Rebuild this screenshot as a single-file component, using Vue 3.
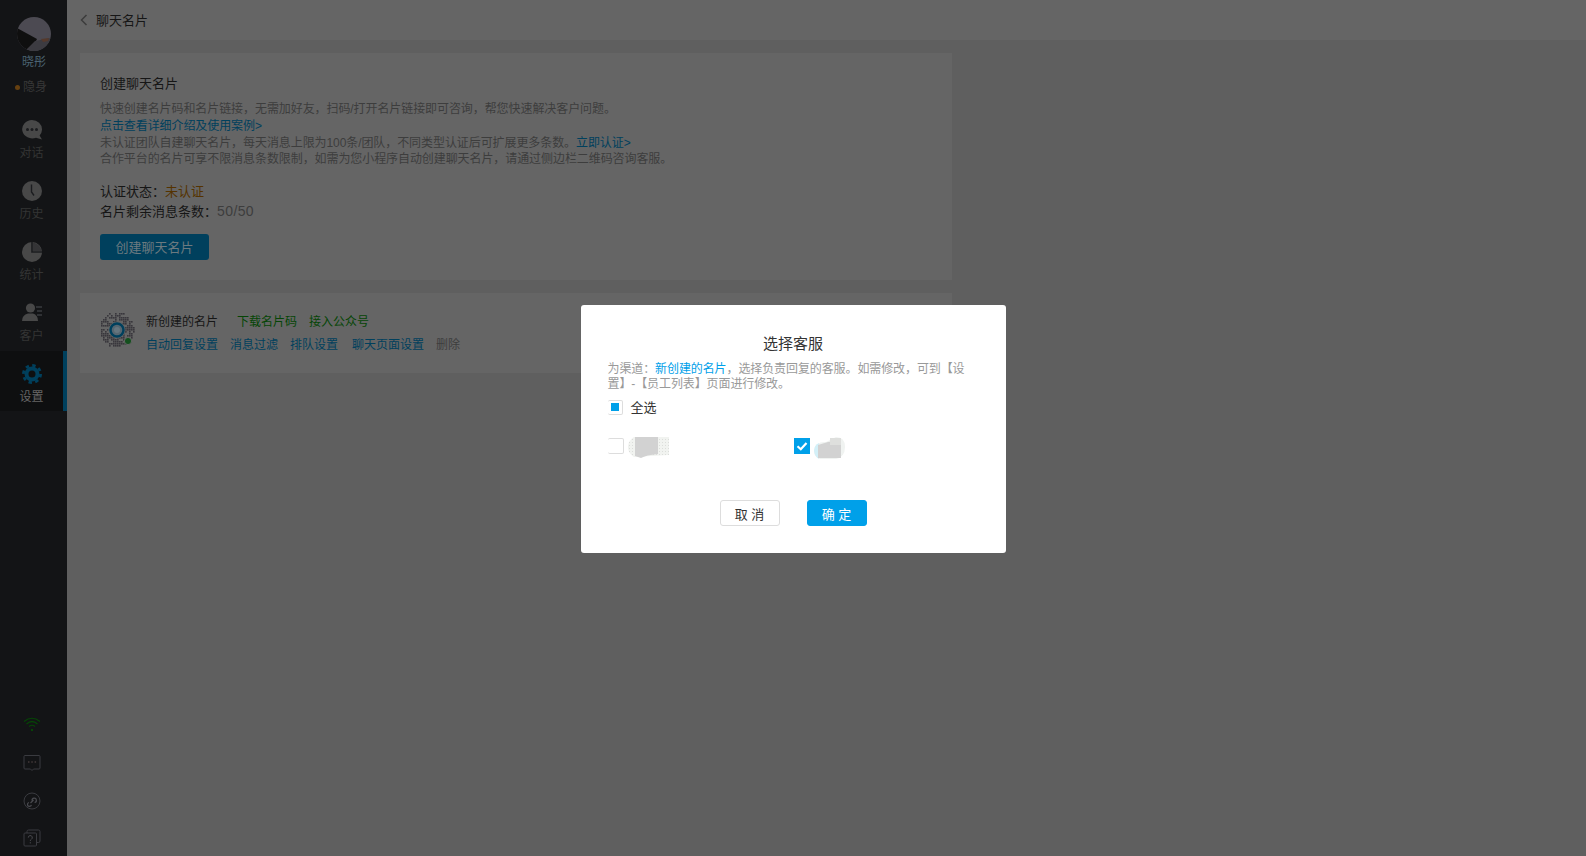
<template>
  <div class="page">
    <aside class="side">
      <svg class="avatar" viewBox="0 0 34 34">
        <clipPath id="av"><circle cx="17" cy="17" r="17" /></clipPath>
        <g clip-path="url(#av)">
          <rect width="34" height="34" fill="#4c4a52" />
          <path d="M0 11 L20 22 L18 26 L8 34 L0 34Z" fill="#0f0f0f" />
          <path d="M8 34 L18 24 L34 21 L34 34Z" fill="#3c3b41" />
          <path d="M24 22 L32 21 L31 24 L26 25Z" fill="#54392c" />
        </g>
      </svg>
      <div class="name">晓彤</div>
      <div class="status"><i class="dot"></i>隐身</div>

      <nav class="nav">
        <a v-for="item in navList" :key="item.label" class="nav-item" :class="{ active: item.active }">
          <svg class="nav-icon" viewBox="0 0 20 20" v-html="item.icon"></svg>
          <span>{{ item.label }}</span>
        </a>
      </nav>

      <div class="tools">
        <svg class="wifi" viewBox="0 0 18 18" fill="none" stroke="#064506" stroke-width="1.2">
          <path d="M1 6.5 Q9 0 17 6.5M3.5 9 Q9 4 14.5 9M6 11.5 Q9 9 12 11.5" />
          <rect x="8" y="14" width="2" height="2" fill="#064506" stroke="none" />
        </svg>
        <svg viewBox="0 0 18 18" fill="none" stroke="#3a3b40" stroke-width="1">
          <path d="M2 1.5H16Q17 1.5 17 2.5V14Q17 15 16 15H10.5L9 16.5L7.5 15H2Q1 15 1 14V2.5Q1 1.5 2 1.5Z" />
          <path d="M5 8h1.5M8.3 8h1.5M11.6 8h1.5" stroke="#5a4a4a" />
        </svg>
        <svg viewBox="0 0 18 18" fill="none" stroke="#3a3b40" stroke-width="1">
          <circle cx="9" cy="9" r="8" />
          <path d="M6 10.5a2 2 0 1 0 2.4 2.4M9 8.5a2.2 2.2 0 1 1 2.6 2M7.5 11L10.5 8" stroke="#4a4b50" stroke-width="1.2" />
        </svg>
        <svg viewBox="0 0 18 18" fill="none" stroke="#3a3b40" stroke-width="1">
          <rect x="1" y="4" width="12.5" height="13" rx="1" />
          <path d="M4 4V2.5Q4 1 5.5 1H15.5Q17 1 17 2.5V12Q17 13.5 15.5 13.5H13.5" />
          <path d="M5.3 8.6a2 2 0 1 1 3 1.7q-1 .6-1 1.6M7.3 13.2v1.2" stroke="#4a4b50" />
        </svg>
      </div>
    </aside>

    <main class="main">
      <header class="head">
        <svg class="back" viewBox="0 0 8 12" fill="none" stroke="#3c3c3c" stroke-width="1.5">
          <path d="M6.5 1L1.5 6L6.5 11" />
        </svg>
        <span>聊天名片</span>
      </header>

      <div class="content">
        <section class="card intro">
          <h3>创建聊天名片</h3>
          <p class="desc">
            快速创建名片码和名片链接，无需加好友，扫码/打开名片链接即可咨询，帮您快速解决客户问题。<br />
            <a class="link">点击查看详细介绍及使用案例&gt;</a><br />
            未认证团队自建聊天名片，每天消息上限为100条/团队，不同类型认证后可扩展更多条数。<a class="link">立即认证&gt;</a><br />
            合作平台的名片可享不限消息条数限制，如需为您小程序自动创建聊天名片，请通过侧边栏二维码咨询客服。
          </p>
          <div class="info">认证状态：<span class="warn">未认证</span></div>
          <div class="info">名片剩余消息条数：<span class="count">50/50</span></div>
          <button class="create">创建聊天名片</button>
        </section>

        <section class="card channel">
          <svg class="qr" viewBox="0 0 34 35">
            <rect v-for="(d, i) in qrDots" :key="i" :x="d.x" :y="d.y" width="1.3" height="1.3" fill="#221f27" />
            <circle cx="16" cy="17" r="8.5" fill="#666" />
            <circle cx="16" cy="17" r="6.5" fill="#566670" stroke="#00405d" stroke-width="2.5" />
            <circle cx="16" cy="17" r="3" fill="#66767f" />
            <circle cx="27" cy="28" r="3.6" fill="#14501e" stroke="#666" />
          </svg>
          <div class="channel-text">
            <div class="row">
              <span class="channel-name">新创建的名片</span>
              <a class="green">下载名片码</a>
              <a class="green">接入公众号</a>
            </div>
            <div class="row">
              <a class="link">自动回复设置</a>
              <a class="link">消息过滤</a>
              <a class="link">排队设置</a>
              <a class="link page-set">聊天页面设置</a>
              <a class="del">删除</a>
            </div>
          </div>
        </section>
      </div>
    </main>

    <div class="mask">
      <div class="dialog">
        <h2>选择客服</h2>
        <p class="tip">
          为渠道：<a>新创建的名片</a>，选择负责回复的客服。如需修改，可到【设<br />置】-【员工列表】页面进行修改。
        </p>
        <label class="all">
          <i class="check half"></i>
          <span>全选</span>
        </label>
        <div class="staff">
          <div class="staff-item">
            <i class="check"></i>
            <svg class="blur" viewBox="0 0 46 26">
              <defs>
                <pattern id="dots" width="3" height="3" patternUnits="userSpaceOnUse">
                  <rect width="1" height="1" fill="#dcdedb" />
                </pattern>
              </defs>
              <path d="M8 4H43V22L8 24Q2 20 2 14Q2 8 8 4Z" fill="#f1f3f0" />
              <path d="M8 4H43V22L8 24Q2 20 2 14Q2 8 8 4Z" fill="url(#dots)" />
              <path d="M9 4H32V21Q20 22 15 25L9 23Z" fill="#d2d2d2" />
            </svg>
          </div>
          <div class="staff-item">
            <i class="check on">
              <svg viewBox="0 0 16 16" fill="none" stroke="#fff" stroke-width="2.2">
                <path d="M3.5 8.2L6.8 11.2L12.5 5" />
              </svg>
            </i>
            <svg class="blur" viewBox="0 0 46 26">
              <path d="M2 18Q4 8 14 9L24 4Q33 4 33 14Q33 24 24 26H8Q2 24 2 18Z" fill="#f0f3f1" />
              <path d="M2 18Q2 12 7 10V26Q3 24 2 18Z" fill="#d3f0f8" />
              <path d="M6 12L16 9L26 8V5H29V25H6Z" fill="#d2d2d2" />
              <rect x="18" y="5" width="11" height="7" fill="#dedfdd" />
            </svg>
          </div>
        </div>
        <div class="actions">
          <button class="btn">取 消</button>
          <button class="btn primary">确 定</button>
        </div>
      </div>
    </div>
  </div>
</template>

<script setup>
const bubble = `<path d="M10 0a10 9.2 0 1 0 4 17.7L20 19.5 17.6 15.6A9 9 0 0 0 20 9.2 10 9.2 0 0 0 10 0Z" fill="#484848"/><circle cx="5.5" cy="9.4" r="1.5" fill="#1b1c1f"/><circle cx="10" cy="9.4" r="1.5" fill="#1b1c1f"/><circle cx="14.5" cy="9.4" r="1.5" fill="#1b1c1f"/>`;
const clock = `<circle cx="10" cy="10" r="10" fill="#484848"/><path d="M9.5 3.5V11L12 14.5" fill="none" stroke="#1b1c1f" stroke-width="1.4"/>`;
const pie = `<circle cx="10" cy="10" r="10" fill="#484848"/><path d="M10 0V10H20" fill="none" stroke="#1b1c1f" stroke-width="1.6"/><path d="M11 0.5A10 10 0 0 1 19.5 9H11Z" fill="#343436"/>`;
const user = `<circle cx="8.5" cy="5" r="4.6" fill="#484848"/><path d="M0 18Q0 12 6 10.5H11Q16 12 16 18Z" fill="#484848"/><path d="M14 4H20M15 8H20M15 12H20" stroke="#3a3b3f" stroke-width="1.4"/>`;
const gear = `<circle cx="10" cy="10" r="5.5" fill="none" stroke="#00405d" stroke-width="4"/><circle cx="10" cy="10" r="8.6" fill="none" stroke="#00405d" stroke-width="2.8" stroke-dasharray="3.4 3.35"/>`;

const navList = [
  { label: "对话", icon: bubble },
  { label: "历史", icon: clock },
  { label: "统计", icon: pie },
  { label: "客户", icon: user },
  { label: "设置", icon: gear, active: true },
];

// 二维码的点，用固定的伪随机数生成，排成圆形
const qrDots = [];
for (let y = 0; y < 17; y++) {
  for (let x = 0; x < 17; x++) {
    const cx = x * 2 + 1;
    const cy = y * 2 + 1;
    const dist = Math.hypot(cx - 16, cy - 17);
    const noise = Math.sin(x * 12.9 + y * 78.2) * 43758.5;
    if (dist < 17.5 && noise - Math.floor(noise) > 0.35) {
      qrDots.push({ x: cx - 0.8, y: cy - 0.8 });
    }
  }
}
</script>

<style>
html,
body {
  margin: 0;
  background: #5f5f5f;
}
</style>

<style scoped>
* {
  box-sizing: border-box;
}
.page {
  display: flex;
  height: 856px;
  overflow: hidden;
  background: #5f5f5f;
  font-family: "Liberation Sans", "Noto Sans CJK SC", sans-serif;
  font-size: 12px;
  color: #161616;
  text-spacing-trim: space-all;
}
.side {
  display: flex;
  flex-direction: column;
  width: 67px;
  flex-shrink: 0;
  padding-top: 17px;
  background: #131416;
}
.avatar {
  display: block;
  width: 34px;
  height: 34px;
  margin: 0 0 0 17px;
}
.name {
  margin-top: 3px;
  padding-left: 1px;
  line-height: 16px;
  text-align: center;
  color: #4c6473;
}
.status {
  display: flex;
  align-items: center;
  margin-top: 9px;
  padding-left: 15px;
  line-height: 16px;
  color: #383838;
}
.dot {
  width: 5px;
  height: 5px;
  margin-right: 3px;
  border-radius: 50%;
  background: #664010;
}
.nav {
  display: flex;
  flex-direction: column;
  gap: 1px;
  margin-top: 12px;
}
.nav-item {
  display: flex;
  flex-direction: column;
  align-items: center;
  height: 60px;
  padding: 13px 4px 0 0;
  color: #343434;
  line-height: 16px;
}
.nav-item span {
  margin-top: 5px;
}
.nav-icon {
  width: 20px;
  height: 20px;
}
.nav-item.active {
  background: #0e0f10;
  border-right: 4px solid #00405d;
  padding-right: 0;
  color: #666;
}
.tools {
  display: flex;
  flex-direction: column;
  align-items: center;
  gap: 19.5px;
  margin-top: auto;
  padding: 0 3px 9px 0;
}
.tools svg {
  width: 18px;
  height: 18px;
}
.tools .wifi {
  margin-bottom: 2px;
}
.main {
  flex: 1;
  min-width: 0;
}
.head {
  display: flex;
  align-items: center;
  height: 40px;
  padding: 0 0 1px 13px;
  background: #656565;
  font-size: 13px;
}
.back {
  width: 8px;
  height: 12px;
  margin: 0 8px 0 0;
}
.content {
  padding: 13px 0 0 13px;
}
.card {
  width: 872px;
  background: #656565;
}
.intro {
  height: 227px;
  padding: 22px 20px 0;
}
.intro h3 {
  margin: 0;
  font-size: 13px;
  font-weight: normal;
  line-height: 18px;
}
.desc {
  margin: 8px 0 13.8px;
  line-height: 16.8px;
  letter-spacing: -0.08px;
  color: #3d3d3d;
}
.link {
  color: #00405d;
}
.info {
  font-size: 13px;
  line-height: 19px;
}
.info + .info {
  margin-top: 1px;
}
.warn {
  color: #553300;
}
.count {
  color: #3d3d3d;
  font-size: 14px;
  letter-spacing: 0.4px;
}
.create {
  display: block;
  width: 109px;
  height: 26px;
  margin-top: 13px;
  padding: 0;
  border: 0;
  border-radius: 3px;
  background: #00405d;
  font: inherit;
  font-size: 13px;
  color: #6c7a80;
}
.channel {
  display: flex;
  gap: 11px;
  height: 80px;
  margin-top: 13px;
  padding: 20px 21px 0;
}
.qr {
  width: 34px;
  height: 35px;
  flex-shrink: 0;
}
.channel-text {
  display: flex;
  flex-direction: column;
  gap: 5px;
}
.row {
  display: flex;
  gap: 12px;
  line-height: 18px;
}
.channel-name {
  margin-right: 7px;
}
.page-set {
  margin-left: 2px;
}
.green {
  color: #064506;
}
.del {
  color: #3d3d3d;
}
.mask {
  position: fixed;
  inset: 0;
  display: flex;
  align-items: center;
  justify-content: center;
  padding-top: 2px;
}
.dialog {
  width: 425px;
  height: 248px;
  padding: 30px 27px 0;
  border-radius: 3px;
  background: #fff;
}
.dialog h2 {
  margin: 0;
  font-size: 15px;
  font-weight: normal;
  line-height: 18px;
  text-align: center;
  color: #333;
}
.tip {
  margin: 9px 0 8px;
  line-height: 15px;
  letter-spacing: -0.1px;
  color: #999;
}
.tip a {
  color: #00a0e9;
}
.all {
  display: flex;
  align-items: center;
  gap: 8px;
  height: 15px;
  font-size: 13px;
  color: #333;
}
.all span {
  margin-top: -3px;
}
.check {
  position: relative;
  display: block;
  width: 16px;
  height: 16px;
  flex-shrink: 0;
  border: 1px solid #ddd;
  border-left: 0;
  border-radius: 2px;
}
.check.half {
  width: 15px;
  height: 15px;
}
.check svg {
  display: block;
  width: 16px;
  height: 16px;
}
.check.on {
  border: 0;
  border-radius: 0;
  background: #00a0e9;
}
.check.half::after {
  content: "";
  position: absolute;
  top: 2px;
  left: 3px;
  width: 8px;
  height: 8px;
  background: #00a0e9;
}
.staff {
  display: grid;
  grid-template-columns: 186px 186px;
  margin-top: 18px;
}
.staff-item {
  display: flex;
  align-items: center;
  gap: 2px;
  height: 26px;
}
.blur {
  width: 46px;
  height: 26px;
}
.actions {
  display: flex;
  justify-content: center;
  gap: 27px;
  margin-top: 41px;
}
.btn {
  width: 60px;
  height: 26px;
  padding: 0;
  border: 1px solid #ddd;
  border-radius: 3px;
  background: #fff;
  font: inherit;
  font-size: 13px;
  color: #333;
}
.btn.primary {
  border-color: #00a0e9;
  background: #00a0e9;
  color: #fff;
}
</style>
